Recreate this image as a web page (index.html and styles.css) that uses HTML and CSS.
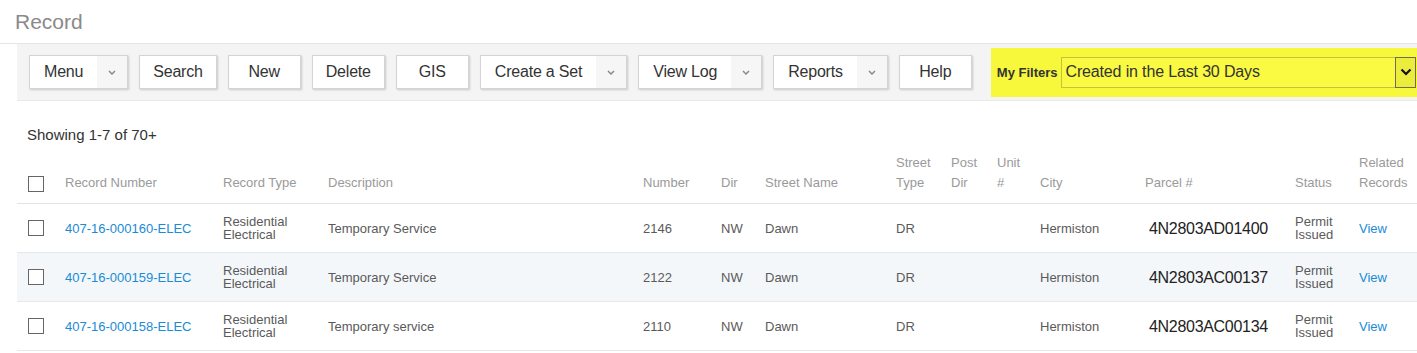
FILE: index.html
```html
<!DOCTYPE html>
<html>
<head>
  <title>Record</title>
  <link rel="stylesheet" href="styles.css">
</head>
<body>
  <h1 class="page-title">Record</h1>

  <!-- Toolbar -->
  <div class="toolbar">
    <button class="button split"><span class="label">Menu</span><span class="caret"><svg width="8" height="5" viewBox="0 0 8 5"><polyline points="1,1 4,4 7,1" fill="none" stroke="#8a8a8a" stroke-width="1.5"/></svg></span></button>
    <button class="button">Search</button>
    <button class="button">New</button>
    <button class="button">Delete</button>
    <button class="button">GIS</button>
    <button class="button split"><span class="label">Create a Set</span><span class="caret"><svg width="8" height="5" viewBox="0 0 8 5"><polyline points="1,1 4,4 7,1" fill="none" stroke="#8a8a8a" stroke-width="1.5"/></svg></span></button>
    <button class="button split"><span class="label">View Log</span><span class="caret"><svg width="8" height="5" viewBox="0 0 8 5"><polyline points="1,1 4,4 7,1" fill="none" stroke="#8a8a8a" stroke-width="1.5"/></svg></span></button>
    <button class="button split"><span class="label">Reports</span><span class="caret"><svg width="8" height="5" viewBox="0 0 8 5"><polyline points="1,1 4,4 7,1" fill="none" stroke="#8a8a8a" stroke-width="1.5"/></svg></span></button>
    <button class="button">Help</button>

    <div class="filters">
      <span class="filters-label">My Filters</span>
      <div class="filter-select">
        <span class="filter-value">Created in the Last 30 Days</span>
        <span class="filter-arrow"><svg width="12" height="8" viewBox="0 0 12 8"><polyline points="1.5,1.5 6,6 10.5,1.5" fill="none" stroke="#111" stroke-width="2.2"/></svg></span>
      </div>
    </div>
  </div>

  <div class="summary">Showing 1-7 of 70+</div>

  <!-- Record list -->
  <table class="records">
    <colgroup>
      <col style="width:48px"><col style="width:158px"><col style="width:105px"><col style="width:315px">
      <col style="width:78px"><col style="width:44px"><col style="width:131px"><col style="width:55px">
      <col style="width:46px"><col style="width:43px"><col style="width:105px"><col style="width:150px">
      <col style="width:64px"><col style="width:58px">
    </colgroup>
    <thead>
      <tr>
        <th class="check-cell"><input type="checkbox" class="check"></th>
        <th>Record Number</th>
        <th>Record Type</th>
        <th>Description</th>
        <th>Number</th>
        <th>Dir</th>
        <th>Street Name</th>
        <th>Street<br>Type</th>
        <th>Post<br>Dir</th>
        <th>Unit<br>#</th>
        <th>City</th>
        <th>Parcel #</th>
        <th>Status</th>
        <th>Related<br>Records</th>
      </tr>
    </thead>
    <tbody>
      <tr>
        <td class="check-cell"><input type="checkbox" class="check"></td>
        <td><a class="link" href="#">407-16-000160-ELEC</a></td>
        <td>Residential<br>Electrical</td>
        <td>Temporary Service</td>
        <td>2146</td>
        <td>NW</td>
        <td>Dawn</td>
        <td>DR</td>
        <td></td>
        <td></td>
        <td>Hermiston</td>
        <td class="parcel">4N2803AD01400</td>
        <td>Permit<br>Issued</td>
        <td><a class="link" href="#">View</a></td>
      </tr>
      <tr>
        <td class="check-cell"><input type="checkbox" class="check"></td>
        <td><a class="link" href="#">407-16-000159-ELEC</a></td>
        <td>Residential<br>Electrical</td>
        <td>Temporary Service</td>
        <td>2122</td>
        <td>NW</td>
        <td>Dawn</td>
        <td>DR</td>
        <td></td>
        <td></td>
        <td>Hermiston</td>
        <td class="parcel">4N2803AC00137</td>
        <td>Permit<br>Issued</td>
        <td><a class="link" href="#">View</a></td>
      </tr>
      <tr>
        <td class="check-cell"><input type="checkbox" class="check"></td>
        <td><a class="link" href="#">407-16-000158-ELEC</a></td>
        <td>Residential<br>Electrical</td>
        <td>Temporary service</td>
        <td>2110</td>
        <td>NW</td>
        <td>Dawn</td>
        <td>DR</td>
        <td></td>
        <td></td>
        <td>Hermiston</td>
        <td class="parcel">4N2803AC00134</td>
        <td>Permit<br>Issued</td>
        <td><a class="link" href="#">View</a></td>
      </tr>
    </tbody>
  </table>
</body>
</html>
```

FILE: styles.css
```css
body {
  margin: 0;
  font-family: "Liberation Sans", Arial, sans-serif;
  color: #333;
  background: #fff;
}

.page-title {
  margin: 0;
  height: 43px;
  line-height: 43px;
  padding-left: 15px;
  font-size: 21px;
  font-weight: normal;
  color: #8a8a8a;
  border-bottom: 1px solid #e6e6e6;
}

/* toolbar */
.toolbar {
  margin-left: 17px;
  height: 56px;
  padding-left: 12px;
  background: #f4f4f4;
  border-bottom: 1px solid #e9e9e9;
  display: flex;
  align-items: center;
  gap: 11px;
}

.button {
  box-sizing: border-box;
  height: 34px;
  min-width: 73px;
  padding: 0 13px;
  background: #fff;
  border: 1px solid #d4d4d4;
  box-shadow: 1px 1px 2px rgba(0,0,0,0.18);
  font-family: "Liberation Sans", Arial, sans-serif;
  font-size: 16px;
  letter-spacing: -0.2px;
  color: #333;
  cursor: pointer;
}

.split {
  display: flex;
  align-items: stretch;
  padding: 0;
}

.split .label {
  display: flex;
  align-items: center;
  padding: 0 14px 0 14px;
}

.split .caret {
  width: 30px;
  background: #f6f6f6;
  display: flex;
  align-items: center;
  justify-content: center;
}

.filters {
  flex: 1;
  margin-left: 8px;
  height: 49px;
  padding-left: 6px;
  background: #f7f73c;
  display: flex;
  align-items: center;
  gap: 4px;
}

.filters-label {
  font-size: 13px;
  font-weight: bold;
  color: #333;
}

.filter-select {
  flex: 1;
  box-sizing: border-box;
  height: 31px;
  margin-right: 1px;
  border: 1px solid #c4c43a;
  background: #fafa42;
  display: flex;
  align-items: center;
}

.filter-value {
  flex: 1;
  padding-left: 3px;
  font-size: 16px;
  letter-spacing: -0.15px;
  color: #333;
}

.filter-arrow {
  align-self: stretch;
  width: 19px;
  margin: -1px -1px -1px 0;
  border: 1px solid #6e6e50;
  background: #ecec3c;
  display: flex;
  align-items: center;
  justify-content: center;
}

/* list */
.summary {
  padding: 24px 0 0 27px;
  font-size: 15px;
  line-height: 20px;
  color: #333;
}

.records {
  margin-left: 17px;
  width: 1400px;
  table-layout: fixed;
  border-collapse: collapse;
}

.records th {
  padding: 8px 0 10px;
  font-size: 13px;
  font-weight: normal;
  line-height: 20px;
  color: #9a9a9a;
  text-align: left;
  vertical-align: bottom;
  border-bottom: 1px solid #e3e3e3;
}

.records td {
  height: 48px;
  padding: 0;
  font-size: 13px;
  line-height: 13px;
  color: #5a5a5a;
  vertical-align: middle;
  border-bottom: 1px solid #e8e8e8;
}

.records tbody tr:nth-child(even) td {
  background: #f4f7fa;
}

.records .check-cell {
  padding-left: 11px;
}

.check {
  display: block;
  appearance: none;
  box-sizing: border-box;
  width: 16px;
  height: 16px;
  margin: 0;
  border: 1px solid #666;
  background: #fff;
}

.records th.check-cell .check {
  margin-bottom: 1px;
}

.records td.parcel {
  padding-left: 4px;
  font-size: 16px;
  letter-spacing: -0.3px;
  color: #222;
}

.link {
  color: #1a8bd5;
  text-decoration: none;
}
```
